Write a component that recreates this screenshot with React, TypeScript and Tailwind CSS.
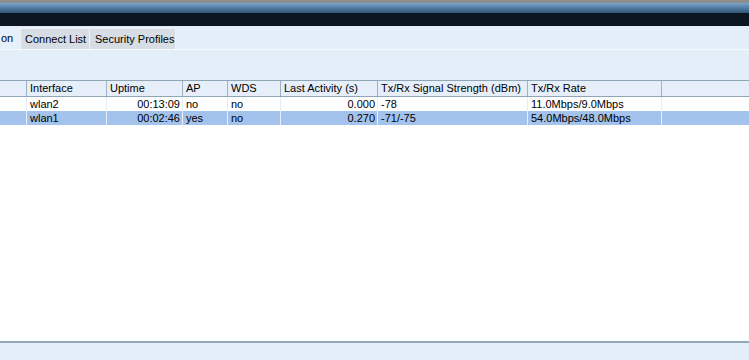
import React from 'react';

type Col = { label: string; w: string; right?: boolean };

const cols: Col[] = [
  { label: '', w: 'w-[27px]' },
  { label: 'Interface', w: 'w-[80px]' },
  { label: 'Uptime', w: 'w-[76px]', right: true },
  { label: 'AP', w: 'w-[45px]' },
  { label: 'WDS', w: 'w-[53px]' },
  { label: 'Last Activity (s)', w: 'w-[97px]', right: true },
  { label: 'Tx/Rx Signal Strength (dBm)', w: 'w-[150px]' },
  { label: 'Tx/Rx Rate', w: 'w-[134px]' },
  { label: '', w: 'flex-1' },
];

const rows = [
  { cells: ['', 'wlan2', '00:13:09', 'no', 'no', '0.000', '-78', '11.0Mbps/9.0Mbps', ''], selected: false },
  { cells: ['', 'wlan1', '00:02:46', 'yes', 'no', '0.270', '-71/-75', '54.0Mbps/48.0Mbps', ''], selected: true },
];

export default function App() {
  return (
    <div
      className="w-[749px] h-[360px] flex flex-col bg-white text-[11px] text-black overflow-hidden"
      style={{ fontFamily: '"Liberation Sans", Arial, sans-serif' }}
    >
      {/* window title bar */}
      <div className="h-[3px] bg-[#8e8e8e]" />
      <div className="h-[10px] bg-gradient-to-b from-[#7aa6cc] to-[#2e5677]" />
      <div className="h-[13px] bg-[#0b1620]" />

      {/* tabs */}
      <div className="h-[24px] bg-[#e4eef8] flex items-end pt-[2px] border-b border-[#f6faff]">
        <div className="h-[22px] w-[20px] flex items-center pl-[1px] bg-[#e6f0fa]">on</div>
        <div className="h-[21px] w-[70px] flex items-center pl-[4px] bg-[#d6dde4] border-l border-r border-t border-[#eef3f8]">
          Connect List
        </div>
        <div className="h-[21px] w-[86px] flex items-center pl-[5px] bg-[#d6dde4] border-r border-t border-[#eef3f8]">
          Security Profiles
        </div>
      </div>

      {/* toolbar area */}
      <div className="h-[30px] bg-[#e4eef8]" />

      {/* table header */}
      <div className="h-[17px] flex bg-[#e6eff9] border-t border-b border-[#8fa6b6]">
        {cols.map((c, i) => (
          <div
            key={i}
            className={`${c.w} shrink-0 h-full flex items-center pl-[3px] border-r border-[#9fb3c2] last:border-r-0`}
          >
            {c.label}
          </div>
        ))}
      </div>

      {/* rows */}
      {rows.map((r, ri) => (
        <div key={ri} className={`h-[14px] flex ${r.selected ? 'bg-[#a3c3ec]' : 'bg-white'}`}>
          {r.cells.map((v, ci) => (
            <div
              key={ci}
              className={`${cols[ci].w} shrink-0 h-full flex items-center border-r border-[#e4eef8] last:border-r-0 ${
                cols[ci].right ? 'justify-end pr-[2px]' : 'pl-[3px]'
              }`}
            >
              {v}
            </div>
          ))}
        </div>
      ))}

      <div className="flex-1 bg-white" />

      {/* status bar */}
      <div className="h-[19px] bg-[#e3eef9] border-t-2 border-[#93a9b9]" />
    </div>
  );
}
